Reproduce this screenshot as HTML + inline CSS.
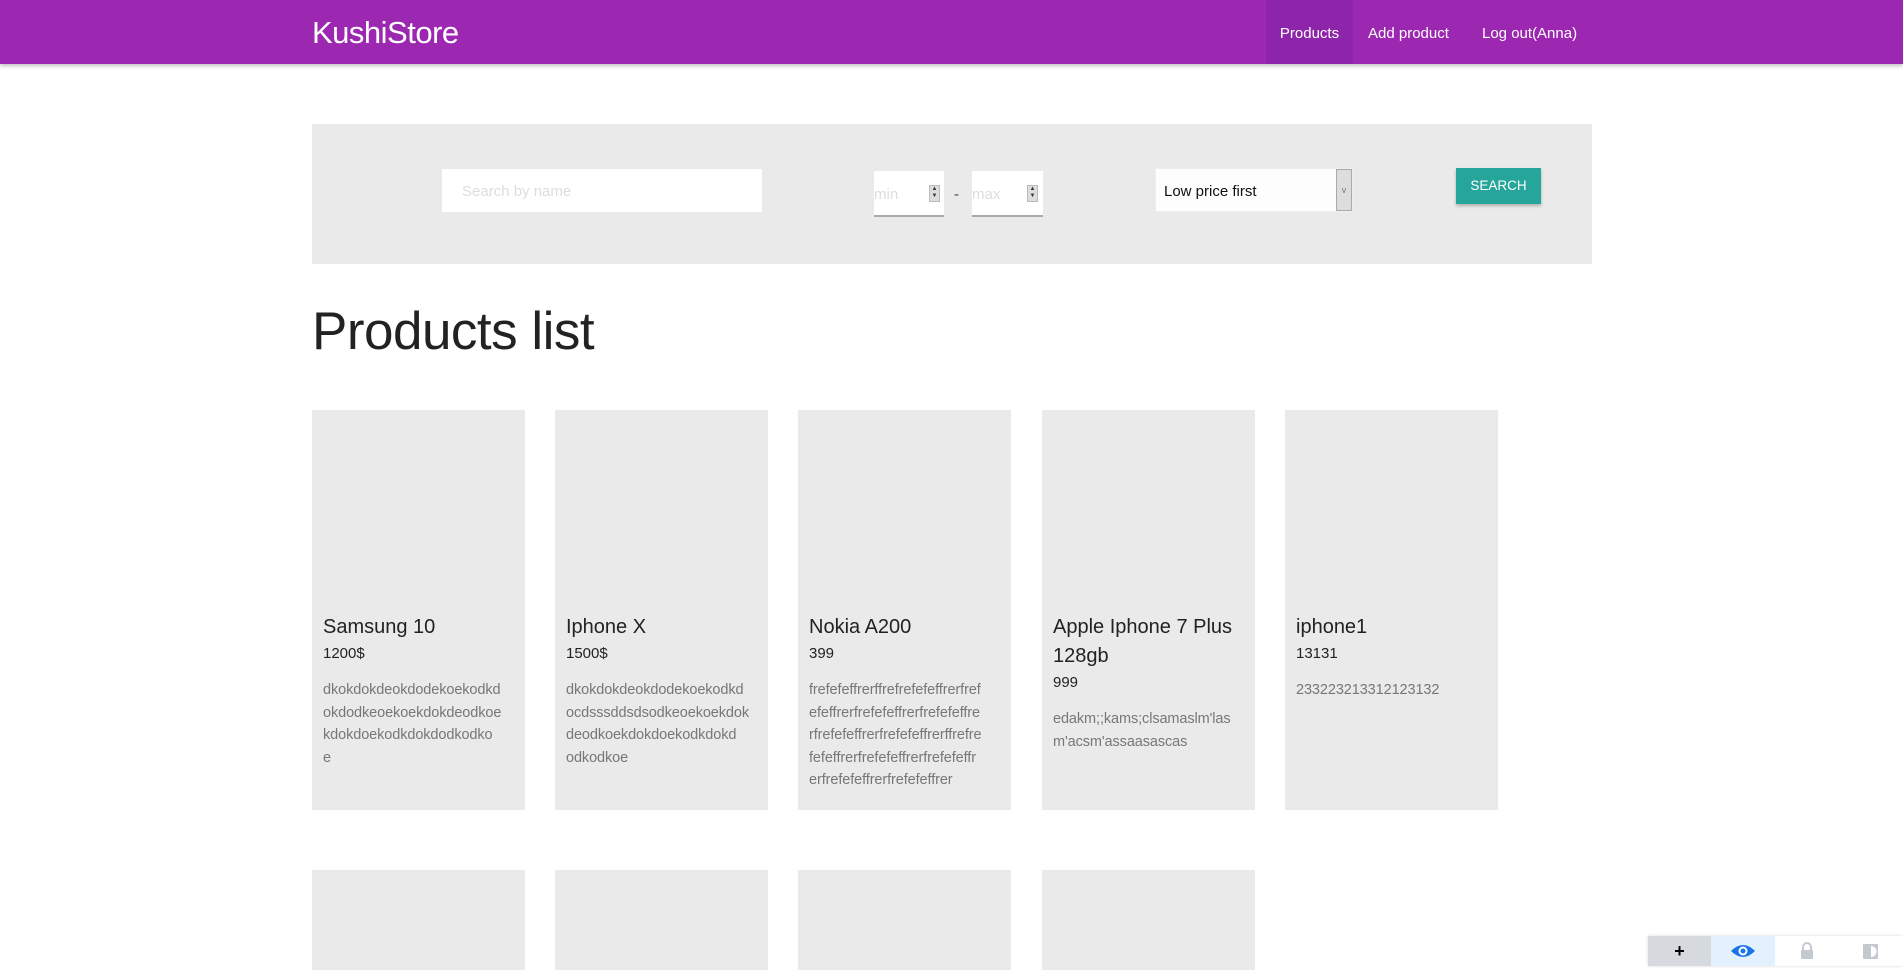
<!DOCTYPE html>
<html><head><meta charset="utf-8">
<style>
*{box-sizing:border-box;margin:0;padding:0}
body{width:1903px;height:966px;overflow:hidden;background:#fff;font-family:"Liberation Sans",sans-serif;position:relative}
.nav{position:absolute;left:0;top:0;width:1903px;height:64px;background:#9c27b0;box-shadow:0 2px 4px rgba(0,0,0,.25)}
.brand{position:absolute;left:312px;top:15px;color:#fff;font-size:31px;letter-spacing:-0.5px}
.nl{position:absolute;top:0;height:64px;line-height:67px;color:#fff;font-size:15px}
.active{background:#8e24aa}
.panel{position:absolute;left:312px;top:124px;width:1280px;height:140px;background:#eaeaea}
.abs{position:absolute}
.inp{background:#fff}
.ph{color:#ddd;font-size:15px}
.spin{position:absolute;width:11px;height:17px;background:#ddd;border:1px solid #bbb;font-size:6px;line-height:7px;text-align:center;color:#333}
h1{position:absolute;left:312px;top:301px;font-weight:400;font-size:53px;color:#222;letter-spacing:-0.5px}
.card{position:absolute;width:213px;background:#eaeaea;padding:203px 11px 0}
.t{font-size:20px;color:#222;line-height:29px}
.p{font-size:15px;color:#222;line-height:20px;margin-top:2px}
.d{font-size:14.5px;color:#777;line-height:22.5px;margin-top:15px;white-space:nowrap;letter-spacing:-0.1px}
</style></head><body>
<div class="nav">
<div class="brand">KushiStore</div>
<div class="nl active" style="left:1266px;width:87px;text-align:center">Products</div>
<div class="nl" style="left:1368px">Add product</div>
<div class="nl" style="left:1482px">Log out(Anna)</div>
</div>
<div class="panel"></div>
<div class="abs inp" style="left:442px;top:169px;width:320px;height:43px"><span class="ph abs" style="left:20px;top:14px">Search by name</span></div>
<div class="abs inp" style="left:874px;top:171px;width:70px;height:46px;border-bottom:2px solid #aaa"><span class="ph abs" style="left:0;top:15px">min</span><div class="spin" style="left:55px;top:14px">▲<br>▼</div></div>
<div class="abs" style="left:954px;top:186px;font-size:15px;color:#444">-</div>
<div class="abs inp" style="left:972px;top:171px;width:71px;height:46px;border-bottom:2px solid #aaa"><span class="ph abs" style="left:0;top:15px">max</span><div class="spin" style="left:55px;top:14px">▲<br>▼</div></div>
<div class="abs" style="left:1155px;top:168px;width:198px;height:44px;background:#fdfdfd;border:1px solid #eee"><span class="abs" style="left:8px;top:14px;font-size:15px;color:#111">Low price first</span><div class="abs" style="right:0;top:0;width:16px;height:42px;background:#ddd;border:1px solid #aaa;color:#777;font-size:9px;text-align:center;line-height:40px">v</div></div>
<div class="abs" style="left:1456px;top:168px;width:85px;height:36px;background:#26a69a;color:#fff;font-size:13.5px;text-align:center;line-height:36px;box-shadow:0 2px 3px rgba(0,0,0,.25)">SEARCH</div>
<h1>Products list</h1>
<div class="card" style="left:312px;top:410px;height:400px"><div class="t">Samsung 10</div><div class="p">1200$</div><div class="d">dkokdokdeokdodekoekodkd<br>okdodkeoekoekdokdeodkoe<br>kdokdoekodkdokdodkodko<br>e</div></div>
<div class="card" style="left:555px;top:410px;height:400px"><div class="t">Iphone X</div><div class="p">1500$</div><div class="d">dkokdokdeokdodekoekodkd<br>ocdsssddsdsodkeoekoekdok<br>deodkoekdokdoekodkdokd<br>odkodkoe</div></div>
<div class="card" style="left:798px;top:410px;height:400px"><div class="t">Nokia A200</div><div class="p">399</div><div class="d">frefefeffrerffrefrefefeffrerfref<br>efeffrerfrefefeffrerfrefefeffre<br>rfrefefeffrerfrefefeffrerffrefre<br>fefeffrerfrefefeffrerfrefefeffr<br>erfrefefeffrerfrefefeffrer</div></div>
<div class="card" style="left:1042px;top:410px;height:400px"><div class="t">Apple Iphone 7 Plus<br>128gb</div><div class="p">999</div><div class="d">edakm;;kams;clsamaslm'las<br>m'acsm'assaasascas</div></div>
<div class="card" style="left:1285px;top:410px;height:400px"><div class="t">iphone1</div><div class="p">13131</div><div class="d">233223213312123132</div></div>
<div class="card" style="left:312px;top:870px;height:100px;padding:0"></div>
<div class="card" style="left:555px;top:870px;height:100px;padding:0"></div>
<div class="card" style="left:798px;top:870px;height:100px;padding:0"></div>
<div class="card" style="left:1042px;top:870px;height:100px;padding:0"></div>
<div class="abs" style="left:1648px;top:936px;width:255px;height:30px;background:#fff;box-shadow:0 0 3px rgba(0,0,0,.15)">
<div class="abs" style="left:0;top:0;width:63px;height:30px;background:#d6d9de;text-align:center;line-height:30px;font-size:18px;font-weight:bold">+</div>
<div class="abs" style="left:63px;top:0;width:64px;height:30px;background:#e3f0fd"><svg width="64" height="30"><path d="M20 15 Q32 3 44 15 Q32 27 20 15Z" fill="#1a73e8"/><circle cx="32" cy="15" r="4.5" fill="#fff"/><circle cx="32" cy="15" r="2.5" fill="#1a73e8"/></svg></div>
<div class="abs" style="left:127px;top:0;width:64px;height:30px"><svg width="64" height="30"><rect x="26" y="14" width="12" height="9" rx="1" fill="#c4c8cf"/><path d="M28 14 V11 A4 4 0 0 1 36 11 V14" stroke="#c4c8cf" stroke-width="2" fill="none"/></svg></div>
<div class="abs" style="left:191px;top:0;width:64px;height:30px"><svg width="64" height="30"><rect x="24" y="8" width="15" height="15" rx="1" fill="#c4c8cf"/><path d="M32 10 A5 5 0 0 1 32 21Z" fill="#fff"/></svg></div>
</div>
</body></html>
